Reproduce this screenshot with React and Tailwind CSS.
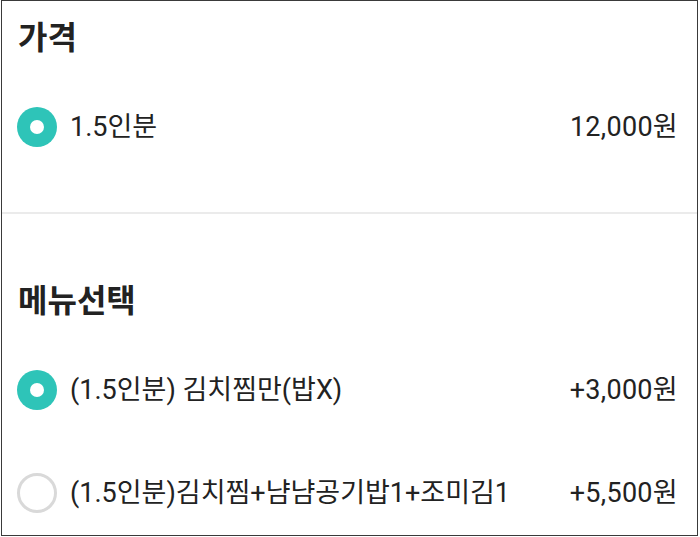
const font = { fontFamily: 'Roboto, "Noto Sans CJK KR", sans-serif' };

function Radio({ checked }) {
  if (checked) {
    return (
      <div className="w-[40px] h-[40px] rounded-full bg-[#2ec4b8] flex items-center justify-center shrink-0">
        <div className="w-[14px] h-[14px] rounded-full bg-white" />
      </div>
    );
  }
  return <div className="w-[40px] h-[40px] rounded-full border-[3px] border-[#d9d9d9] shrink-0" />;
}

function Option({ checked, label, price, h }) {
  return (
    <div className={`flex items-center pl-[15px] pr-[19px] ${h}`}>
      <Radio checked={checked} />
      <span className="ml-[13px] text-[27px] text-[#222]">{label}</span>
      <span className="ml-auto text-[27px] tracking-[0.3px] text-[#222]">{price}</span>
    </div>
  );
}

export default function App() {
  return (
    <div className="w-[700px] h-[537px] bg-white" style={font}>
      <div className="ml-[1px] w-[697px] h-[536px] border border-[#3a3a3a] overflow-hidden">
        <div className="h-[73px] flex items-center pl-[16px] text-[32px] font-bold text-[#222]">가격</div>
        <Option checked label="1.5인분" price="12,000원" h="h-[106px]" />
        <div className="h-[32px]" />
        <div className="h-[2px] bg-[#ebebeb]" />
        <div className="h-[50px]" />
        <div className="h-[74px] flex items-center pl-[16px] text-[32px] font-bold text-[#222]">메뉴선택</div>
        <Option checked label="(1.5인분) 김치찜만(밥X)" price="+3,000원" h="h-[104px]" />
        <Option label="(1.5인분)김치찜+냠냠공기밥1+조미김1" price="+5,500원" h="h-[102px]" />
      </div>
    </div>
  );
}
